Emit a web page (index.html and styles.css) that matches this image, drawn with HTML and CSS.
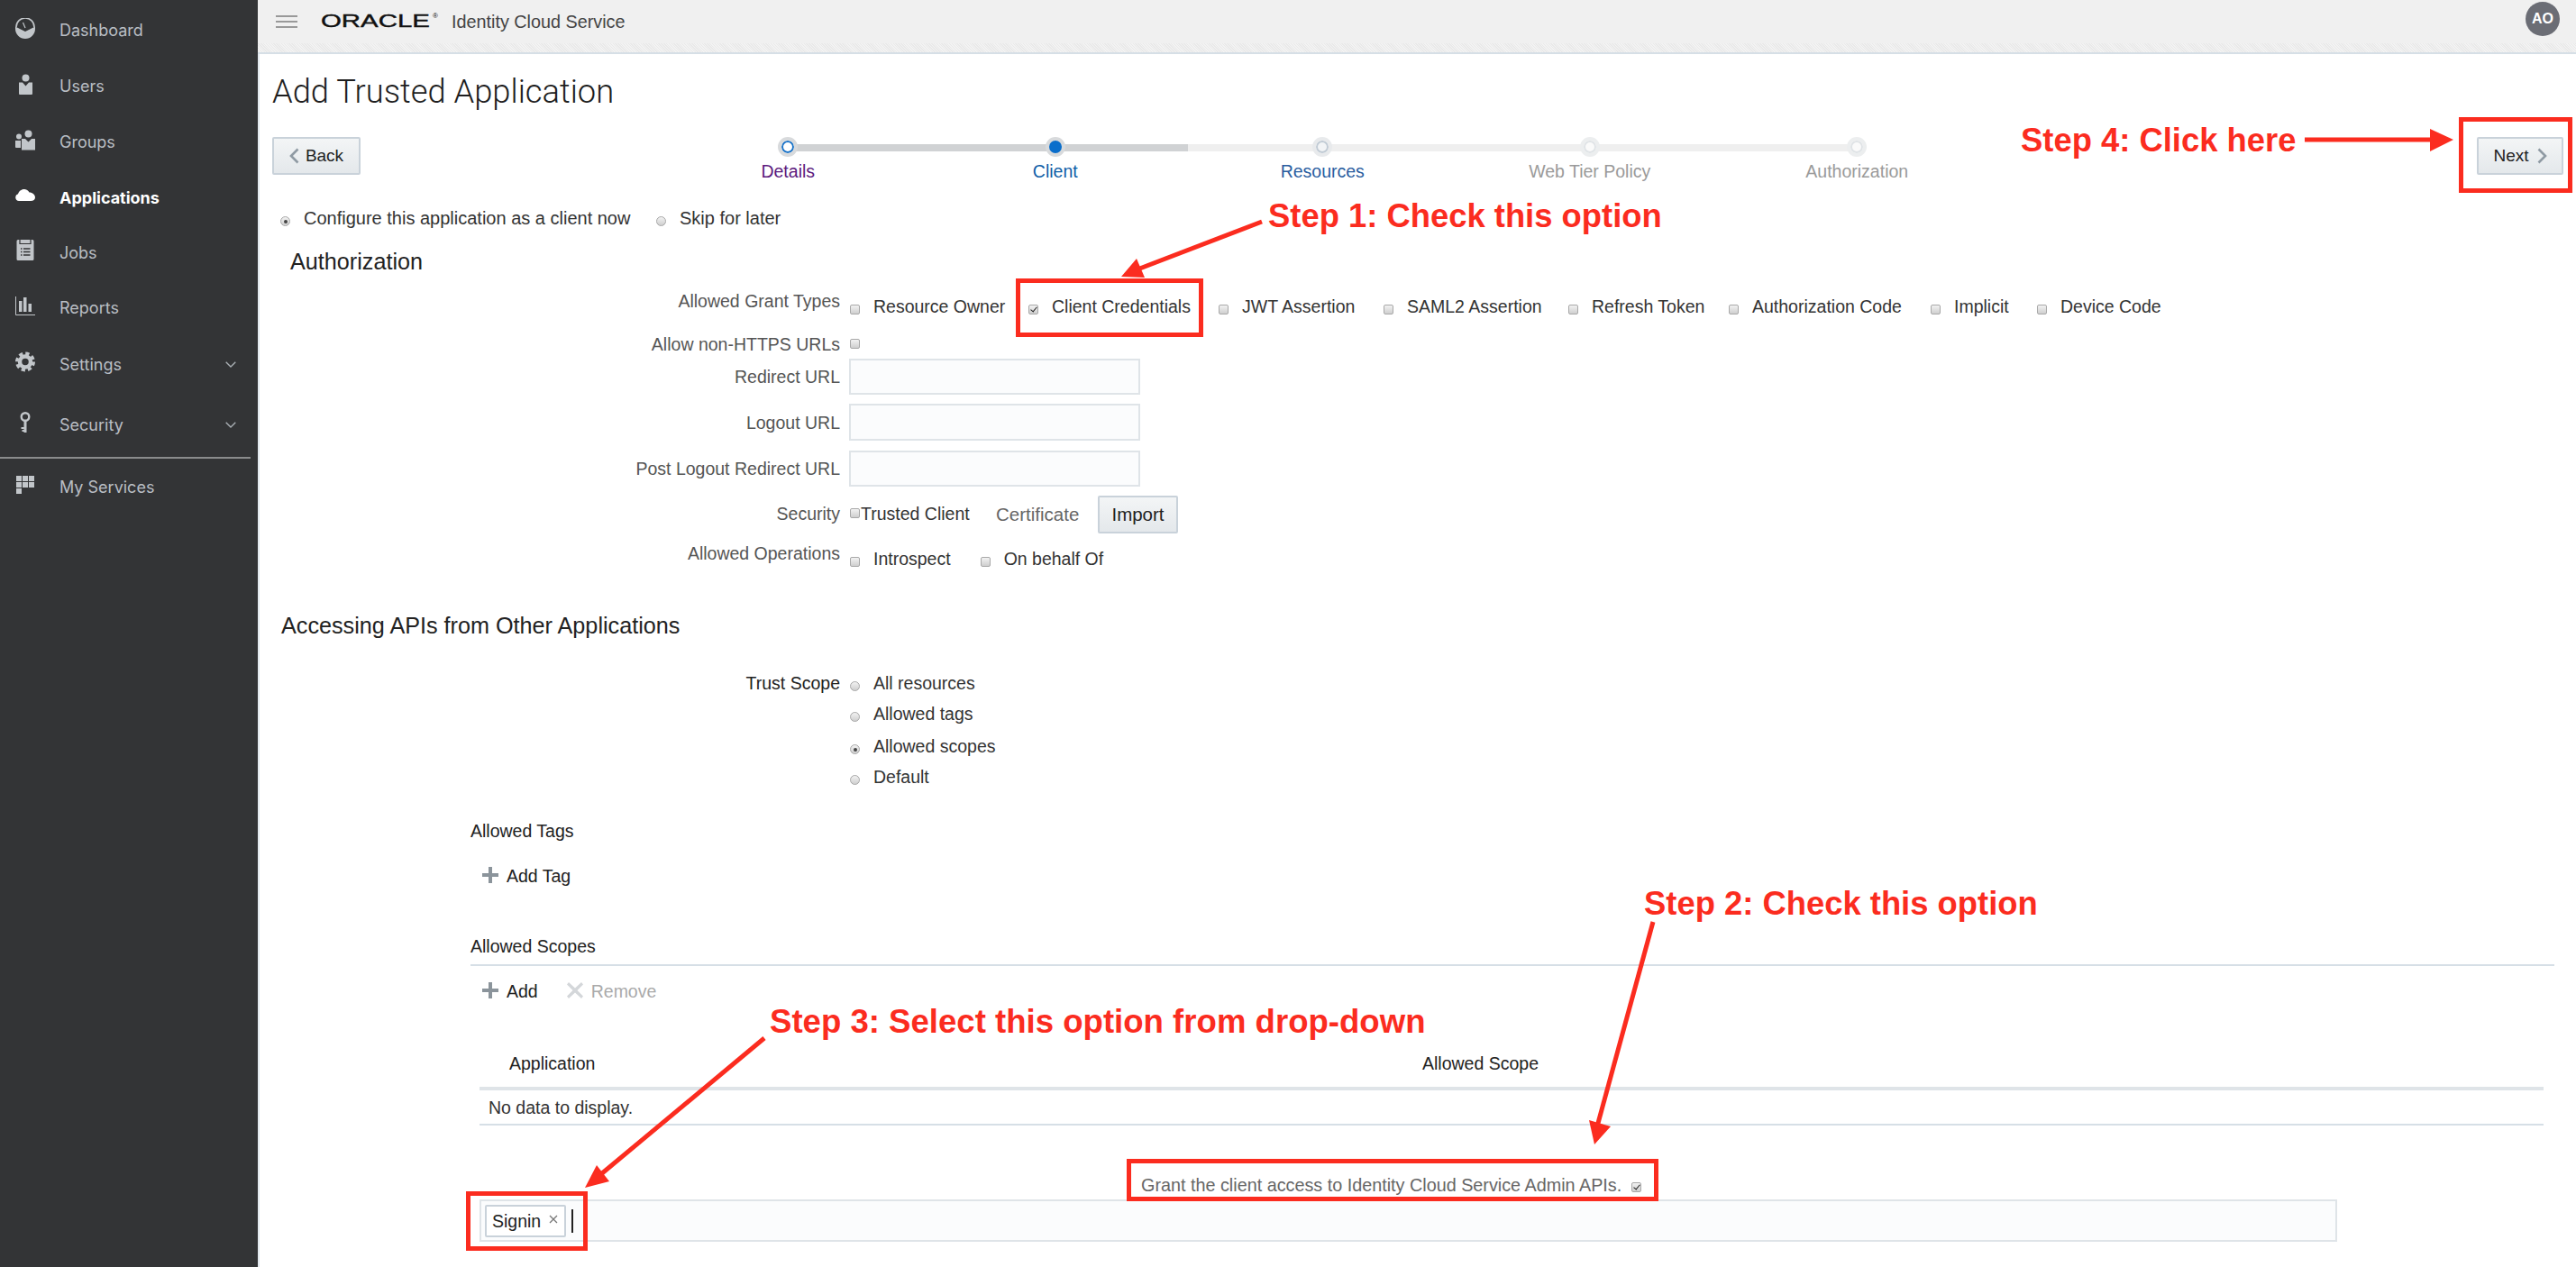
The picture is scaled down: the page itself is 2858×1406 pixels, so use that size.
FILE: index.html
```html
<!DOCTYPE html>
<html>
<head>
<meta http-equiv="Content-Type" content="text/html; charset=utf-8"/>
<title>Add Trusted Application</title>
<link rel="stylesheet" href="styles.css">
</head>
<body>

<nav class="sidebar">
  <a class="nav-item">
    <svg class="nav-icon" viewBox="0 0 22 23"><path d="M1 10a10 10 0 0 1 20 0" fill="none" stroke="#c2c6ca" stroke-width="1.6"/><path d="M11 11L8.500 5" stroke="#c2c6ca" stroke-width="1.200"/><path d="M0 9.500L11 15L22 9.500V12a11 11 0 0 1-22 0z" fill="#c2c6ca"/></svg>
    <span>Dashboard</span>
  </a>
  <a class="nav-item">
    <svg class="nav-icon" viewBox="0 0 22 23"><circle cx="11.500" cy="4.500" r="4" fill="#c2c6ca"/><path d="M4 9.500h4l3.500 4 3.500-4h4V22a1 1 0 0 1-1 1H5a1 1 0 0 1-1-1z" fill="#c2c6ca"/></svg>
    <span>Users</span>
  </a>
  <a class="nav-item">
    <svg class="nav-icon" viewBox="0 0 22 23"><circle cx="14.500" cy="4.500" r="4" fill="#c2c6ca"/><circle cx="4" cy="7.500" r="3" fill="#c2c6ca"/><path d="M7 10h4l3.500 3.500L18 10h4v12.500H7z" fill="#c2c6ca"/><path d="M0 12h6v8H1a1 1 0 0 1-1-1z" fill="#c2c6ca"/></svg>
    <span>Groups</span>
  </a>
  <a class="nav-item active">
    <svg class="nav-icon" viewBox="0 0 22 23"><path d="M4 18a4 4 0 0 1-1-7.800C4 7 7 4.500 10.500 5c2.500.300 4 1.800 5 3.500 3.500 0 6.500 2.500 6.500 5.500 0 2.500-2 4-5 4z" fill="#fff"/></svg>
    <span>Applications</span>
  </a>
  <a class="nav-item">
    <svg class="nav-icon" viewBox="0 0 22 23"><path d="M3 0h16a1.500 1.500 0 0 1 1.500 1.500v20A1.500 1.500 0 0 1 19 23H3a1.500 1.500 0 0 1-1.500-1.500v-20A1.500 1.500 0 0 1 3 0z" fill="#c2c6ca"/><path d="M5 0v4.500h12V0" fill="none" stroke="#333436" stroke-width="1.200"/><path d="M6 10h1.500M9 10h7.500M6 13.500h1.500M9 13.500h7.500M6 17h1.500M9 17h7.500" stroke="#333436" stroke-width="1.400"/></svg>
    <span>Jobs</span>
  </a>
  <a class="nav-item">
    <svg class="nav-icon" viewBox="0 0 22 23"><path d="M.5 1v20.500H22" fill="none" stroke="#c2c6ca" stroke-width="1"/><path d="M4 6h3.500v12H4zM9 2h3.500v16H9zM14.500 9H18v9h-3.500z" fill="#c2c6ca"/></svg>
    <span>Reports</span>
  </a>
  <a class="nav-item">
    <svg class="nav-icon" viewBox="0 0 22 23"><circle cx="11" cy="11.500" r="6" fill="none" stroke="#c2c6ca" stroke-width="4.500"/><circle cx="11" cy="11.500" r="9.200" fill="none" stroke="#c2c6ca" stroke-width="3.600" stroke-dasharray="4.200 3.025"/></svg>
    <span>Settings</span>
    <svg class="nav-caret" viewBox="0 0 12 7"><path d="M.7.700L6 6l5.300-5.300" fill="none" stroke="#aab0b5" stroke-width="1.300"/></svg>
  </a>
  <a class="nav-item">
    <svg class="nav-icon" viewBox="0 0 22 23"><circle cx="11" cy="5.500" r="4.300" fill="none" stroke="#c2c6ca" stroke-width="2.400"/><path d="M9.500 9h3v14h-3zM6.500 17h3v2h-3zM7.500 20h2v2h-2z" fill="#c2c6ca"/></svg>
    <span>Security</span>
    <svg class="nav-caret" viewBox="0 0 12 7"><path d="M.7.700L6 6l5.300-5.300" fill="none" stroke="#aab0b5" stroke-width="1.300"/></svg>
  </a>
  <div class="nav-rule"></div>
  <a class="nav-item">
    <svg class="nav-icon" viewBox="0 0 22 23"><path d="M1 1h6v6H1zM8 1h6v6H8zM15 1h6v6h-6zM1 8h6v6H1zM8 8h6v6H8zM15 8h6v6h-6zM1 15h6v6H1z" fill="#c2c6ca"/></svg>
    <span>My Services</span>
  </a>
</nav>

<div class="main">
  <header class="topbar">
    <div class="burger"><i></i><i></i><i></i></div>
    <div class="logo"><span class="logo-word">ORACLE</span><span class="logo-reg">®</span></div>
    <span class="product">Identity Cloud Service</span>
    <span class="avatar">AO</span>
  </header>
  <div class="hatch"></div>

  <div class="content">
    <h1>Add Trusted Application</h1>

    <div class="wizard">
      <button class="btn btn-back"><svg class="chev" viewBox="0 0 11 18"><path d="M9.500 1.500L2 9l7.500 7.500" fill="none" stroke="#8f9aa3" stroke-width="2.600"/></svg>Back</button>
      <ol class="train">
        <li class="step visited"><span class="dot"></span><span class="step-label">Details</span></li>
        <li class="step current"><span class="dot"></span><span class="step-label">Client</span></li>
        <li class="step next"><span class="dot"></span><span class="step-label">Resources</span></li>
        <li class="step off"><span class="dot"></span><span class="step-label">Web Tier Policy</span></li>
        <li class="step off"><span class="dot"></span><span class="step-label">Authorization</span></li>
      </ol>
      <button class="btn btn-next">Next<svg class="chev" viewBox="0 0 11 18"><path d="M1.500 1.500L9 9l-7.500 7.500" fill="none" stroke="#8f9aa3" stroke-width="2.600"/></svg></button>
    </div>

    <div class="client-choice">
      <label class="opt"><span class="rb on"></span>Configure this application as a client now</label>
      <label class="opt"><span class="rb"></span>Skip for later</label>
    </div>

    <h2 class="auth-title">Authorization</h2>

    <div class="row row-grant">
      <div class="lbl">Allowed Grant Types</div>
      <div class="grant-types">
        <label class="opt"><span class="cb"></span>Resource Owner</label>
        <label class="opt"><span class="cb on"></span>Client Credentials</label>
        <label class="opt"><span class="cb"></span>JWT Assertion</label>
        <label class="opt"><span class="cb"></span>SAML2 Assertion</label>
        <label class="opt"><span class="cb"></span>Refresh Token</label>
        <label class="opt"><span class="cb"></span>Authorization Code</label>
        <label class="opt"><span class="cb"></span>Implicit</label>
        <label class="opt"><span class="cb"></span>Device Code</label>
      </div>
    </div>
    <div class="row row-https">
      <div class="lbl">Allow non-HTTPS URLs</div>
      <div class="opts"><span class="cb"></span></div>
    </div>
    <div class="row row-url row-redirect">
      <div class="lbl">Redirect URL</div>
      <div class="txt-input"></div>
    </div>
    <div class="row row-url row-logout">
      <div class="lbl">Logout URL</div>
      <div class="txt-input"></div>
    </div>
    <div class="row row-url row-post">
      <div class="lbl">Post Logout Redirect URL</div>
      <div class="txt-input"></div>
    </div>
    <div class="row row-security">
      <div class="lbl">Security</div>
      <div class="security">
        <label class="trusted"><span class="cb cb-tight"></span>Trusted Client</label>
        <span class="cert">Certificate</span>
        <button class="btn btn-import">Import</button>
      </div>
    </div>
    <div class="row row-ops">
      <div class="lbl">Allowed Operations</div>
      <div class="opts opts-ops">
        <label class="opt"><span class="cb"></span>Introspect</label>
        <label class="opt"><span class="cb"></span>On behalf Of</label>
      </div>
    </div>

    <h2 class="apis-title">Accessing APIs from Other Applications</h2>

    <div class="row row-trust">
      <div class="lbl lbl-dark">Trust Scope</div>
      <div class="trust-list">
        <label class="opt"><span class="rb"></span>All resources</label>
        <label class="opt"><span class="rb"></span>Allowed tags</label>
        <label class="opt"><span class="rb on"></span>Allowed scopes</label>
        <label class="opt"><span class="rb"></span>Default</label>
      </div>
    </div>

    <div class="scopes">
      <div class="sub-title tags-title">Allowed Tags</div>
      <div class="tools tools-tag">
        <span class="tool"><svg class="tool-icon" viewBox="0 0 18 18"><path d="M7 0h4v7h7v4h-7v7H7v-7H0V7h7z" fill="#8b949b"/></svg>Add Tag</span>
      </div>

      <div class="sub-title scopes-title">Allowed Scopes</div>
      <div class="tools tools-scope">
        <span class="tool"><svg class="tool-icon" viewBox="0 0 18 18"><path d="M7 0h4v7h7v4h-7v7H7v-7H0V7h7z" fill="#8b949b"/></svg>Add</span>
        <span class="tool tool-off"><svg class="tool-icon" viewBox="0 0 18 18"><path d="M2 0l7 6.500L16 0l2 2.500L11.500 9l6.500 6.500-2 2.500-7-6.500L2 18l-2-2.500L6.500 9 0 2.500z" fill="#d4d7da"/></svg>Remove</span>
      </div>

      <table class="grid">
        <thead><tr><th class="col-app">Application</th><th>Allowed Scope</th></tr></thead>
        <tbody><tr><td colspan="2">No data to display.</td></tr></tbody>
      </table>

      <label class="grant">Grant the client access to Identity Cloud Service Admin APIs.<span class="cb on"></span></label>

      <div class="tag-input">
        <span class="chip">Signin<svg class="chip-x" viewBox="0 0 10 10"><path d="M1 1l8 8M9 1l-8 8" stroke="#777" stroke-width="1.300"/></svg></span>
        <span class="caret"></span>
      </div>
    </div>
  </div>
</div>

<!-- annotations drawn over the screenshot -->
<svg class="arrows" viewBox="0 0 2858 1406">
  <g class="arrow">
    <path d="M1400 246L1262 299"/>
    <polygon points="1244,307 1261,287 1270,308"/>
  </g>
  <g class="arrow">
    <path d="M1834 1023L1772 1250"/>
    <polygon points="1769,1270 1763,1243 1787,1250"/>
  </g>
  <g class="arrow">
    <path d="M848 1152L668 1302"/>
    <polygon points="649,1318 662,1293 676,1311"/>
  </g>
  <g class="arrow">
    <path d="M2557 155H2700"/>
    <polygon points="2722,155 2696,143 2696,168"/>
  </g>
</svg>
<div class="note note-1">Step 1: Check this option</div>
<div class="note note-2">Step 2: Check this option</div>
<div class="note note-3">Step 3: Select this option from drop-down</div>
<div class="note note-4">Step 4: Click here</div>
<div class="mark mark-1"></div>
<div class="mark mark-2"></div>
<div class="mark mark-3"></div>
<div class="mark mark-4"></div>

</body>
</html>
```

FILE: styles.css
```css
html, body {
   margin: 0;
   height: 100%;
}

body {
   position: relative;
   display: flex;
   height: 1406px;
   overflow: hidden;
   background-color: white;
   font-family: "Liberation Sans", Arial, sans-serif;
   font-size: 19.500px;
   line-height: 24px;
   color: #333;
}

/* sidebar */
.sidebar {
   flex: 0 0 286px;
   display: grid;
   grid-template-rows: 62px 62px 62px 61px 61px 62px 63px 71px 2px 64px;
   align-content: start;
   padding-top: 3px;
   background-color: #333436;
   box-sizing: border-box;
}

.nav-item {
   display: flex;
   align-items: center;
   padding-left: 17px;
   font-family: Inter, "Liberation Sans", sans-serif;
   font-size: 18px;
   color: #b9bec4;
}

.nav-item.active {
   font-weight: 700;
   color: white;
}

.nav-icon {
   flex: none;
   width: 22px;
   height: 23px;
   margin-right: 27px;
   margin-bottom: 6px;
}

.nav-caret {
   width: 12px;
   height: 7px;
   margin-left: auto;
   margin-right: 24px;
}

.nav-rule {
   width: 278px;
   background-color: #8a8b8c;
}

/* top bar */
.main {
   flex: 1;
   min-width: 0;
   display: flex;
   flex-direction: column;
}

.topbar {
   display: flex;
   align-items: center;
   height: 48px;
   padding-left: 20px;
   padding-right: 18px;
   background-color: #f0f0f0;
}

.burger {
   display: flex;
   flex-direction: column;
   gap: 4px;
   width: 24px;
   margin-right: 26px;
}

.burger i {
   display: block;
   height: 2px;
   background-color: #999;
}

.logo {
   flex: none;
   display: flex;
   width: 145px;
   height: 24px;
   margin-bottom: 3px;
}

.logo-word {
   display: inline-block;
   width: 84px;
   margin-right: 40px;
   font-size: 20px;
   font-weight: 400;
   color: #111;
   -webkit-text-stroke: 0.400px #111;
   transform: scaleX(1.470);
   transform-origin: left center;
}

.logo-reg {
   font-size: 8px;
   line-height: 14px;
   color: #111;
}

.product {
   font-size: 19.800px;
   color: #444;
}

.avatar {
   display: flex;
   align-items: center;
   justify-content: center;
   width: 38px;
   height: 38px;
   margin-left: auto;
   margin-bottom: 6px;
   border-radius: 50%;
   background-color: #6b6d75;
   color: white;
   font-size: 16px;
   font-weight: 700;
}

.hatch {
   height: 10px;
   background: repeating-linear-gradient(45deg, #f3f3f3, #f3f3f3 1px, #e9e9e9 1px, #e9e9e9 2px);
   border-bottom: 2px solid #d6dfe6;
}

/* form area */
.content {
   flex: 1;
   border-left: 2px solid #e3e9ef;
}

h1 {
   margin: 12px 0 0 14px;
   height: 60px;
   font-family: Roboto, "Liberation Sans", sans-serif;
   font-size: 36.300px;
   font-weight: 300;
   line-height: 60px;
   color: #1e1e1e;
}

.wizard {
   display: flex;
   height: 42px;
   margin-top: 20px;
   padding: 0 14px;
}

.btn {
   display: inline-flex;
   align-items: center;
   justify-content: center;
   box-sizing: border-box;
   border: 2px solid #c9d2da;
   border-radius: 2px;
   background: linear-gradient(#f3f5f6, #e4e8eb);
   font-family: inherit;
   font-size: 19px;
   color: #222;
   padding: 0;
}

.btn-back {
   flex: none;
   width: 98px;
   height: 42px;
   gap: 7px;
}

.btn-next {
   flex: none;
   width: 96px;
   height: 42px;
   gap: 9px;
   margin-left: auto;
}

.chev {
   width: 11px;
   height: 18px;
}

.train {
   position: relative;
   display: flex;
   margin: 0 0 0 326px;
   padding: 0;
   list-style: none;
}

.train::before {
   content: "";
   position: absolute;
   left: 148px;
   right: 148px;
   top: 8px;
   height: 8px;
   background-color: #efefef;
}

.train::after {
   content: "";
   position: absolute;
   left: 148px;
   width: 444px;
   top: 8px;
   height: 8px;
   background-color: #d0d2d4;
}

.step {
   position: relative;
   z-index: 1;
   width: 296.500px;
   display: flex;
   flex-direction: column;
   align-items: center;
}

.dot {
   flex: none;
   box-sizing: border-box;
   width: 22px;
   height: 22px;
   border: 4px solid #d8dadc;
   border-radius: 50%;
   background-color: white;
   box-shadow: inset 0 0 0 2px #1a73c8;
}

.step-label {
   flex: none;
   margin-top: 4px;
   white-space: nowrap;
}

.visited .step-label { color: #5c1a7e; }
.current .step-label { color: #0f5ea8; }
.next .step-label { color: #2a5da0; }
.off .step-label { color: #9a9a9a; }

.current .dot {
   background-color: #0a6ecb;
   box-shadow: none;
}

.next .dot {
   border-color: #e8eaec;
   background-color: #f2f4f6;
   box-shadow: inset 0 0 0 2px #c0cad4;
}

.off .dot {
   border-color: #eceeef;
   background-color: #fafafa;
   box-shadow: inset 0 0 0 2px #dfe3e6;
}

.client-choice {
   display: grid;
   grid-template-columns: 417px auto;
   justify-content: start;
   margin: 36px 0 0 22px;
   font-size: 20px;
}

.opt {
   display: flex;
   align-items: center;
   white-space: nowrap;
}

/* fake check boxes and radios */
.cb, .rb {
   position: relative;
   flex: none;
   box-sizing: border-box;
   width: 11px;
   height: 11px;
   margin-top: 6px;
   margin-left: 1px;
   margin-right: 15px;
   border: 1px solid #a8a8a8;
   background: linear-gradient(#f2f2f2, #cfcfcf);
}

.cb {
   border-radius: 2px;
}

.rb {
   border-radius: 50%;
   margin-top: 7px;
}

.cb.on::after {
   content: "";
   position: absolute;
   left: 3px;
   top: 0;
   width: 3px;
   height: 6px;
   border-right: 1.500px solid #222;
   border-bottom: 1.500px solid #222;
   transform: rotate(40deg);
}

.rb.on::after {
   content: "";
   position: absolute;
   left: 2.500px;
   top: 2.500px;
   width: 4px;
   height: 4px;
   border-radius: 50%;
   background-color: #444;
}

.auth-title, .apis-title {
   height: 32px;
   margin: 0;
   font-family: "Liberation Sans", sans-serif;
   font-size: 25.200px;
   font-weight: 400;
   line-height: 32px;
   color: #222;
}

.auth-title {
   margin: 20px 0 0 34px;
}

.apis-title {
   margin: 46px 0 0 24px;
}

.row {
   display: grid;
   grid-template-columns: 644px 1fr;
   column-gap: 10px;
}

.lbl {
   text-align: right;
   white-space: nowrap;
   color: #555;
}

.lbl-dark {
   color: #222;
}

.opts {
   display: flex;
}

.grant-types {
   display: grid;
   grid-template-columns: 198px 211px 183px 205px 178px 224px 118px auto;
   justify-content: start;
   margin-top: 6px;
}

.opts-ops {
   margin-top: 6px;
   gap: 32px;
}

.row-grant { margin-top: 16px; height: 30px; }
.row-https { margin-top: 18px; }
.row-redirect { margin-top: 4px; height: 40px; }
.row-logout { margin-top: 10px; height: 41px; }
.row-post { margin-top: 11px; height: 40px; }
.row-security { margin-top: 10px; height: 42px; }
.row-ops { margin-top: 10px; height: 30px; }
.row-trust { margin-top: 36px; }

.row-url {
   align-items: center;
}

.txt-input {
   box-sizing: border-box;
   width: 323px;
   height: 100%;
   border: 2px solid #dfe4e8;
   background-color: #fbfcfd;
}

.row-security .lbl {
   margin-top: 8px;
}

.security {
   display: flex;
   align-items: center;
}

.trusted {
   display: flex;
   align-items: center;
   width: 135px;
   margin-top: -2px;
   white-space: nowrap;
}

.cb-tight {
   margin: 0 1px 2px 1px;
}

.cert {
   width: 93px;
   margin-left: 28px;
   font-size: 20.500px;
   color: #666;
}

.btn-import {
   flex: none;
   width: 89px;
   height: 42px;
   margin-left: 20px;
   font-size: 20.500px;
}

.trust-list {
   display: grid;
   grid-template-rows: 34px 36px 34px 24px;
}

.trust-list .opt {
   height: 24px;
}

/* scopes block */
.scopes {
   padding-left: 234px;
}

.sub-title {
   color: #222;
}

.tags-title {
   margin-top: 36px;
}

.tools {
   display: flex;
   gap: 32px;
   padding-left: 13px;
}

.tools-tag {
   margin-top: 26px;
}

.scopes-title {
   margin-top: 54px;
   margin-right: 24px;
   padding-bottom: 8px;
   border-bottom: 2px solid #d6dfe6;
}

.tools-scope {
   margin-top: 16px;
}

.tool {
   display: flex;
   align-items: center;
   color: #222;
}

.tool-off {
   color: #aaa;
}

.tool-icon {
   width: 18px;
   height: 18px;
   margin-right: 9px;
   margin-bottom: 3px;
}

.grid {
   width: 2290px;
   margin-left: 10px;
   border-collapse: collapse;
   table-layout: fixed;
}

.grid th {
   height: 96px;
   padding: 56px 0 0 0;
   box-sizing: border-box;
   border-bottom: 4px solid #dfe4e8;
   font-weight: 400;
   text-align: left;
   vertical-align: top;
   color: #222;
}

.grid th.col-app {
   width: 1046px;
   padding-left: 33px;
}

.grid td {
   height: 40px;
   padding: 0 0 0 10px;
   box-sizing: border-box;
   border-bottom: 2px solid #d6dfe6;
}

.grant {
   display: flex;
   align-items: center;
   margin: 54px 0 0 744px;
   font-size: 19.800px;
   color: #666;
   white-space: nowrap;
}

.grant .cb {
   margin: 4px 0 0 11px;
}

.tag-input {
   display: flex;
   align-items: center;
   box-sizing: border-box;
   width: 2061px;
   height: 47px;
   margin: 4px 0 0 10px;
   padding-left: 4px;
   border: 2px solid #dfe4e8;
   background-color: #fbfcfd;
}

.chip {
   display: flex;
   align-items: center;
   box-sizing: border-box;
   width: 90px;
   height: 36px;
   padding-left: 6px;
   border: 2px solid #c9d2da;
   border-radius: 2px;
   background-color: white;
   color: #222;
}

.chip-x {
   width: 10px;
   height: 10px;
   margin-left: 9px;
   margin-bottom: 3px;
}

.caret {
   width: 2px;
   height: 26px;
   margin-left: 6px;
   background-color: #222;
}

/* red annotations */
.arrows {
   position: absolute;
   left: 0;
   top: 0;
   width: 2858px;
   height: 1406px;
}

.arrow path {
   fill: none;
   stroke: #fb2c1f;
   stroke-width: 5;
}

.arrow polygon {
   fill: #fb2c1f;
}

.note {
   position: absolute;
   font-family: "Liberation Sans", Arial, sans-serif;
   font-size: 36.400px;
   font-weight: 700;
   line-height: 44px;
   color: #fb2c1f;
   white-space: nowrap;
}

.note-1 { left: 1407px; top: 218px; }
.note-2 { left: 1824px; top: 981px; }
.note-3 { left: 854px; top: 1112px; font-size: 36.600px; }
.note-4 { left: 2242px; top: 134px; }

.mark {
   position: absolute;
   box-sizing: border-box;
   border: 5px solid #fb2c1f;
}

.mark-1 { left: 1127px; top: 309px; width: 208px; height: 65px; }
.mark-2 { left: 1250px; top: 1286px; width: 590px; height: 47px; }
.mark-3 { left: 517px; top: 1322px; width: 135px; height: 66px; }
.mark-4 { left: 2728px; top: 130px; width: 126px; height: 84px; }
```
